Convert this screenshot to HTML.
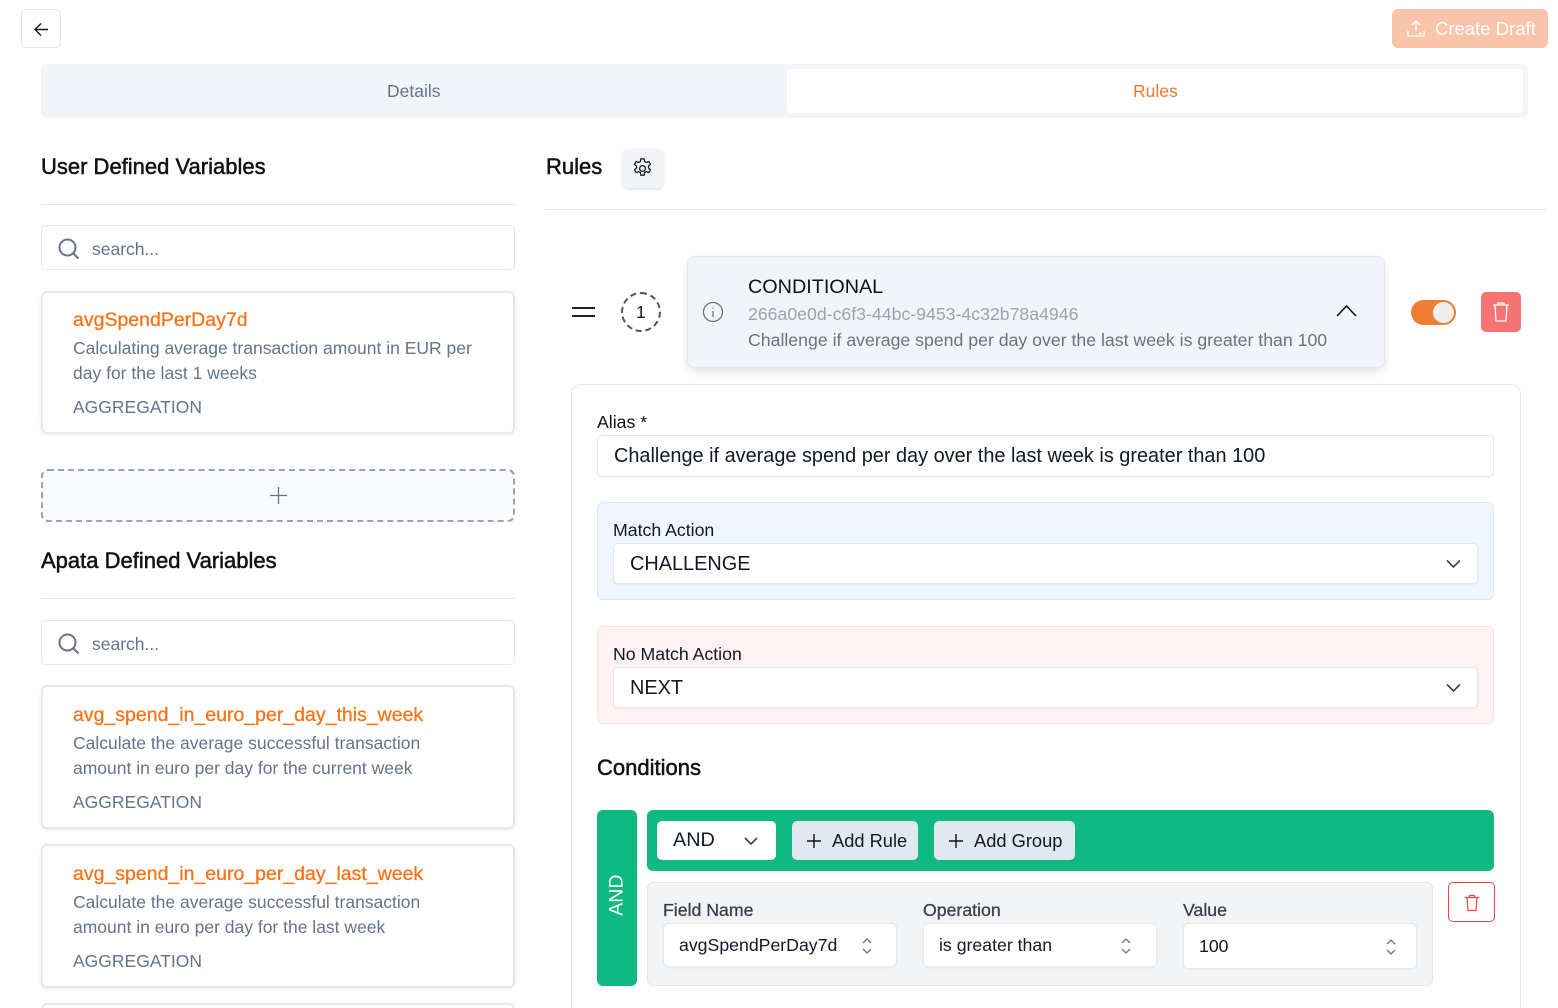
<!DOCTYPE html>
<html><head><meta charset="utf-8">
<style>
*{box-sizing:border-box;margin:0;padding:0}
html{width:1558px;height:1008px;overflow:hidden}
body{width:1558px;height:1008px;overflow:hidden;background:#fff;font-family:"Liberation Sans",Arial,sans-serif;color:#111827;position:relative}
.a{position:absolute}
.t{white-space:nowrap;line-height:1}
.h{font-size:22px;color:#111;-webkit-text-stroke:0.5px #111}
.card{position:absolute;left:41px;width:474px;border:2px solid #e2e8f0;border-radius:6px;background:#fff;box-shadow:0 1px 3px rgba(0,0,0,.08);overflow:hidden}
.card .n{position:absolute;left:30px;color:#f97316;font-size:19.5px;white-space:nowrap;-webkit-text-stroke:0.3px #f97316}
.card .d{position:absolute;left:30px;color:#64748b;font-size:17.5px;line-height:25px;width:415px}
.card .g{position:absolute;left:30px;color:#64748b;font-size:17.5px}
.search{position:absolute;left:41px;width:474px;height:45px;border:1px solid #e2e8f0;border-radius:5px}
.search span{position:absolute;left:50px;top:13px;font-size:17.5px;color:#64748b}
.inp{position:absolute;background:#fff;border:1px solid #e5e7eb;border-radius:5px;box-shadow:0 1px 2px rgba(0,0,0,.05)}
</style></head><body>

<div class="a" style="left:21px;top:9px;width:40px;height:39px;border:1px solid #e2e8f0;border-radius:5px">
<svg class="a" style="left:11px;top:11px" width="17" height="17" viewBox="0 0 17 17" fill="none" stroke="#111" stroke-width="1.4"><path d="M15 8.5H2M8 2.5L2 8.5l6 6"/></svg></div>

<div class="a" style="left:1392px;top:9px;width:156px;height:39px;background:#f9c4a9;border-radius:6px">
<svg class="a" style="left:14px;top:10px" width="20" height="20" viewBox="0 0 20 20" fill="none" stroke="#fff" stroke-width="1.3"><path d="M10 2v10M6 6l4-4 4 4M2 12v5h16v-5M13 14.5h3"/></svg>
<span class="a t" style="left:43px;top:11px;color:#fff;font-size:18.5px">Create Draft</span></div>

<div class="a" style="left:41px;top:64px;width:1487px;height:54px;background:#f1f5f9;border-radius:5px"></div>
<span class="a t" style="left:387px;top:83px;font-size:17.5px;color:#64748b">Details</span>
<div class="a" style="left:787px;top:69px;width:736px;height:44px;background:#fff;border-radius:4px"></div>
<span class="a t" style="left:1133px;top:83px;font-size:17.5px;color:#ea7a2e">Rules</span>

<span class="a t h" style="left:41px;top:156px">User Defined Variables</span>
<div class="a" style="left:41px;top:204px;width:474px;height:1px;background:#e2e8f0"></div>
<div class="search" style="top:225px"><svg class="a" style="left:15px;top:11px" width="24" height="24" viewBox="0 0 24 24" fill="none" stroke="#64748b" stroke-width="2"><circle cx="10.5" cy="10.5" r="8"/><path d="M16.5 16.5l5 5"/></svg><span>search...</span></div>
<div class="card" style="top:291px;height:143px"><span class="n" style="top:16px">avgSpendPerDay7d</span><div class="d" style="top:43px">Calculating average transaction amount in EUR per day for the last 1 weeks</div><span class="g" style="top:104px">AGGREGATION</span></div>
<div class="a" style="left:41px;top:469px;width:474px;height:53px;border:2px dashed #9ca3af;border-radius:7px;background:#f8fafc"></div>
<svg class="a" style="left:270px;top:487px" width="17" height="17" viewBox="0 0 17 17" stroke="#64748b" stroke-width="1.3"><path d="M8.5 0v17M0 8.5h17"/></svg>

<span class="a t h" style="left:41px;top:550px">Apata Defined Variables</span>
<div class="a" style="left:41px;top:598px;width:474px;height:1px;background:#e2e8f0"></div>
<div class="search" style="top:620px"><svg class="a" style="left:15px;top:11px" width="24" height="24" viewBox="0 0 24 24" fill="none" stroke="#64748b" stroke-width="2"><circle cx="10.5" cy="10.5" r="8"/><path d="M16.5 16.5l5 5"/></svg><span>search...</span></div>
<div class="card" style="top:685px;height:144px"><span class="n" style="top:17px">avg_spend_in_euro_per_day_this_week</span><div class="d" style="top:44px;width:370px">Calculate the average successful transaction amount in euro per day for the current week</div><span class="g" style="top:105px">AGGREGATION</span></div>
<div class="card" style="top:844px;height:144px"><span class="n" style="top:17px">avg_spend_in_euro_per_day_last_week</span><div class="d" style="top:44px;width:370px">Calculate the average successful transaction amount in euro per day for the last week</div><span class="g" style="top:105px">AGGREGATION</span></div>
<div class="card" style="top:1003px;height:40px"></div>

<span class="a t h" style="left:546px;top:156px">Rules</span>
<div class="a" style="left:623px;top:149px;width:40px;height:39px;background:#f1f5f9;border-radius:5px;box-shadow:0 1px 3px rgba(0,0,0,.15)">
<svg class="a" style="left:8px;top:8px" width="23" height="23" viewBox="0 0 24 24" fill="none" stroke="#111" stroke-width="1.3"><path d="M10.3 2h3.4l.5 2.7 1.8 1 2.6-1 1.7 3-2.1 1.8v2l2.1 1.8-1.7 3-2.6-1-1.8 1-.5 2.7h-3.4l-.5-2.7-1.8-1-2.6 1-1.7-3 2.1-1.8v-2L3.7 7.7l1.7-3 2.6 1 1.8-1z"/><circle cx="12" cy="12" r="3"/></svg></div>
<div class="a" style="left:546px;top:209px;width:1000px;height:1px;background:#e2e8f0"></div>

<div class="a" style="left:572px;top:307px;width:23px;height:2px;background:#222"></div>
<div class="a" style="left:572px;top:315px;width:23px;height:2px;background:#222"></div>
<div class="a" style="left:621px;top:292px;width:40px;height:40px;border:2px dashed #555;border-radius:50%"></div>
<span class="a t" style="left:636px;top:304px;font-size:17.5px">1</span>

<div class="a" style="left:687px;top:256px;width:698px;height:112px;background:#f1f5f9;border:1px solid #e2e8f0;border-radius:8px;box-shadow:0 4px 8px rgba(0,0,0,.1)"></div>
<svg class="a" style="left:702px;top:301px" width="22" height="22" viewBox="0 0 22 22" fill="none" stroke="#6b7280" stroke-width="1.3"><circle cx="11" cy="11" r="9.5"/><path d="M11 10v6M11 6.5v1"/></svg>
<span class="a t" style="left:748px;top:278px;font-size:19.8px;color:#111">CONDITIONAL</span>
<span class="a t" style="left:748px;top:306px;font-size:17.7px;color:#9ca3af">266a0e0d-c6f3-44bc-9453-4c32b78a4946</span>
<span class="a t" style="left:748px;top:332px;font-size:17.7px;color:#6b7280">Challenge if average spend per day over the last week is greater than 100</span>
<svg class="a" style="left:1336px;top:304px" width="21" height="13" viewBox="0 0 21 13" fill="none" stroke="#111" stroke-width="1.6"><path d="M1 12L10.5 2 20 12"/></svg>

<div class="a" style="left:1411px;top:300px;width:45px;height:25px;background:#ed7f33;border-radius:13px"></div>
<div class="a" style="left:1433px;top:302px;width:21px;height:21px;background:#eee;border-radius:50%"></div>
<div class="a" style="left:1481px;top:292px;width:40px;height:40px;background:#f47474;border-radius:5px">
<svg class="a" style="left:10px;top:9px" width="20" height="22" viewBox="0 0 20 22" fill="none" stroke="#fff" stroke-width="1.3"><path d="M2 4h16M7 4V2h6v2M4 4l1 16h10l1-16"/></svg></div>

<div class="a" style="left:571px;top:384px;width:950px;height:640px;border:1px solid #e5e7eb;border-radius:10px;background:#fff"></div>
<span class="a t" style="left:597px;top:414px;font-size:17.7px;color:#111">Alias *</span>
<div class="inp" style="left:597px;top:435px;width:897px;height:42px"><span class="a t" style="left:16px;top:11px;font-size:19.9px">Challenge if average spend per day over the last week is greater than 100</span></div>

<div class="a" style="left:597px;top:502px;width:897px;height:98px;background:#eff6ff;border:1px solid #dbeafe;border-radius:6px"></div>
<span class="a t" style="left:613px;top:522px;font-size:17.7px">Match Action</span>
<div class="inp" style="left:613px;top:543px;width:865px;height:41px"><span class="a t" style="left:16px;top:11px;font-size:19.9px">CHALLENGE</span>
<svg class="a" style="left:832px;top:15px" width="15" height="10" viewBox="0 0 15 10" fill="none" stroke="#374151" stroke-width="1.6"><path d="M1 1.5l6.5 6.5L14 1.5"/></svg></div>

<div class="a" style="left:597px;top:626px;width:897px;height:98px;background:#fef2f2;border:1px solid #fde2e2;border-radius:6px"></div>
<span class="a t" style="left:613px;top:646px;font-size:17.7px">No Match Action</span>
<div class="inp" style="left:613px;top:667px;width:865px;height:41px"><span class="a t" style="left:16px;top:11px;font-size:19.9px">NEXT</span>
<svg class="a" style="left:832px;top:15px" width="15" height="10" viewBox="0 0 15 10" fill="none" stroke="#374151" stroke-width="1.6"><path d="M1 1.5l6.5 6.5L14 1.5"/></svg></div>

<span class="a t h" style="left:597px;top:757px">Conditions</span>

<div class="a" style="left:597px;top:810px;width:40px;height:176px;background:#10b981;border-radius:6px"></div>
<span class="a t" style="left:599px;top:888px;font-size:19.5px;color:#fff;transform:rotate(-90deg);width:36px;text-align:center">AND</span>
<div class="a" style="left:647px;top:810px;width:847px;height:61px;background:#10b981;border-radius:6px"></div>
<div class="a" style="left:657px;top:821px;width:119px;height:39px;background:#fff;border-radius:5px"><span class="a t" style="left:16px;top:10px;font-size:19.8px">AND</span>
<svg class="a" style="left:87px;top:16px" width="14" height="9" viewBox="0 0 14 9" fill="none" stroke="#374151" stroke-width="1.6"><path d="M1 1l6 6 6-6"/></svg></div>
<div class="a" style="left:792px;top:821px;width:126px;height:39px;background:#e2e8f0;border-radius:5px">
<svg class="a" style="left:15px;top:13px" width="14" height="14" viewBox="0 0 14 14" stroke="#111" stroke-width="1.4"><path d="M7 0v14M0 7h14"/></svg>
<span class="a t" style="left:40px;top:11px;font-size:18.3px">Add Rule</span></div>
<div class="a" style="left:934px;top:821px;width:141px;height:39px;background:#e2e8f0;border-radius:5px">
<svg class="a" style="left:15px;top:13px" width="14" height="14" viewBox="0 0 14 14" stroke="#111" stroke-width="1.4"><path d="M7 0v14M0 7h14"/></svg>
<span class="a t" style="left:40px;top:11px;font-size:18.3px">Add Group</span></div>

<div class="a" style="left:647px;top:882px;width:786px;height:104px;background:#f3f4f6;border:1px solid #e5e7eb;border-radius:6px"></div>
<span class="a t" style="left:663px;top:902px;font-size:17.7px;color:#374151;-webkit-text-stroke:0.3px #374151">Field Name</span>
<span class="a t" style="left:923px;top:902px;font-size:17.7px;color:#374151;-webkit-text-stroke:0.3px #374151">Operation</span>
<span class="a t" style="left:1183px;top:902px;font-size:17.7px;color:#374151;-webkit-text-stroke:0.3px #374151">Value</span>
<div class="inp" style="left:663px;top:923px;width:234px;height:44px"><span class="a t" style="left:15px;top:13px;font-size:17.7px">avgSpendPerDay7d</span>
<svg class="a" style="left:198px;top:14px" width="10" height="16" viewBox="0 0 10 16" fill="none" stroke="#6b7280" stroke-width="1.3"><path d="M1 5l4-4 4 4M1 11l4 4 4-4"/></svg></div>
<div class="inp" style="left:923px;top:923px;width:234px;height:44px"><span class="a t" style="left:15px;top:13px;font-size:17.7px">is greater than</span>
<svg class="a" style="left:197px;top:14px" width="10" height="16" viewBox="0 0 10 16" fill="none" stroke="#6b7280" stroke-width="1.3"><path d="M1 5l4-4 4 4M1 11l4 4 4-4"/></svg></div>
<div class="inp" style="left:1183px;top:923px;width:234px;height:46px"><span class="a t" style="left:15px;top:14px;font-size:17.7px">100</span>
<svg class="a" style="left:202px;top:15px" width="10" height="16" viewBox="0 0 10 16" fill="none" stroke="#6b7280" stroke-width="1.3"><path d="M1 5l4-4 4 4M1 11l4 4 4-4"/></svg></div>
<div class="a" style="left:1448px;top:882px;width:47px;height:40px;border:1px solid #ef4444;border-radius:5px;background:#fff">
<svg class="a" style="left:15px;top:11px" width="16" height="18" viewBox="0 0 16 18" fill="none" stroke="#ef4444" stroke-width="1.2"><path d="M1 3.5h14M5.5 3.5V1.5h5v2M3 3.5l1 13h8l1-13"/></svg></div>

</body></html>
